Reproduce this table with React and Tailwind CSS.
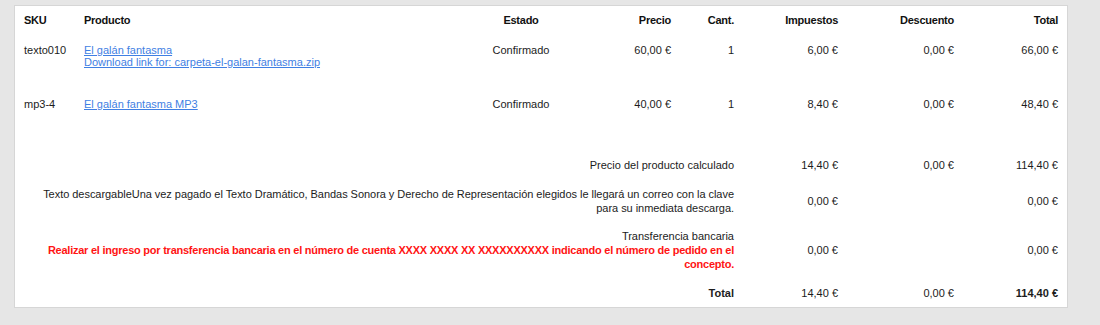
import React from "react";

const cols = "grid grid-cols-[60px_377px_120px_90px_63px_104px_116px_104px]";

function Link({ children }) {
  return <a href="#" className="text-[#3f7fe3] underline">{children}</a>;
}

export default function App() {
  return (
    <div className="h-[325px] w-[1100px] bg-[#e6e6e6] pt-[5px] pl-[14px] font-['Liberation_Sans',Arial,sans-serif] text-[11px] text-[#1c1c1c]">
      <div className="w-[1054px] border border-[#d6d6d6] bg-white px-[9px] pt-[7px] pb-[7px]">
        {/* Header */}
        <div className={`${cols} font-bold leading-[14px] text-[#111] tracking-[-0.25px]`}>
          <div>SKU</div>
          <div>Producto</div>
          <div className="text-center">Estado</div>
          <div className="text-right">Precio</div>
          <div className="text-right">Cant.</div>
          <div className="text-right">Impuestos</div>
          <div className="text-right">Descuento</div>
          <div className="text-right">Total</div>
        </div>

        {/* Row 1 */}
        <div className={`${cols} mt-[17px] leading-[12px]`}>
          <div>texto010</div>
          <div className="flex flex-col items-start">
            <Link>El galán fantasma</Link>
            <Link>Download link for: carpeta-el-galan-fantasma.zip</Link>
          </div>
          <div className="text-center">Confirmado</div>
          <div className="text-right">60,00 €</div>
          <div className="text-right">1</div>
          <div className="text-right">6,00 €</div>
          <div className="text-right">0,00 €</div>
          <div className="text-right">66,00 €</div>
        </div>

        {/* Row 2 */}
        <div className={`${cols} mt-[30px] leading-[12px]`}>
          <div>mp3-4</div>
          <div>
            <Link>El galán fantasma MP3</Link>
          </div>
          <div className="text-center">Confirmado</div>
          <div className="text-right">40,00 €</div>
          <div className="text-right">1</div>
          <div className="text-right">8,40 €</div>
          <div className="text-right">0,00 €</div>
          <div className="text-right">48,40 €</div>
        </div>

        {/* Footer 1 */}
        <div className={`${cols} mt-[48px] items-center leading-[14px]`}>
          <div className="col-span-5 text-right">Precio del producto calculado</div>
          <div className="text-right">14,40 €</div>
          <div className="text-right">0,00 €</div>
          <div className="text-right">114,40 €</div>
        </div>

        {/* Footer 2 */}
        <div className={`${cols} mt-[15px] items-center leading-[14px]`}>
          <div className="col-span-5 text-right tracking-[-0.04px]">
            Texto descargableUna vez pagado el Texto Dramático, Bandas Sonora y Derecho de Representación elegidos le llegará un correo con la clave para su inmediata descarga.
          </div>
          <div className="text-right">0,00 €</div>
          <div></div>
          <div className="text-right">0,00 €</div>
        </div>

        {/* Footer 3 */}
        <div className={`${cols} mt-[14px] items-center leading-[14px]`}>
          <div className="col-span-5 text-right">
            <div>Transferencia bancaria</div>
            <div className="font-bold text-[#ff1414] tracking-[-0.24px]">
              Realizar el ingreso por transferencia bancaria en el número de cuenta XXXX XXXX XX XXXXXXXXXX indicando el número de pedido en el concepto.
            </div>
          </div>
          <div className="text-right">0,00 €</div>
          <div></div>
          <div className="text-right">0,00 €</div>
        </div>

        {/* Total */}
        <div className={`${cols} mt-[15px] items-center leading-[14px]`}>
          <div className="col-span-5 text-right font-bold">Total</div>
          <div className="text-right">14,40 €</div>
          <div className="text-right">0,00 €</div>
          <div className="text-right font-bold">114,40 €</div>
        </div>
      </div>
    </div>
  );
}
